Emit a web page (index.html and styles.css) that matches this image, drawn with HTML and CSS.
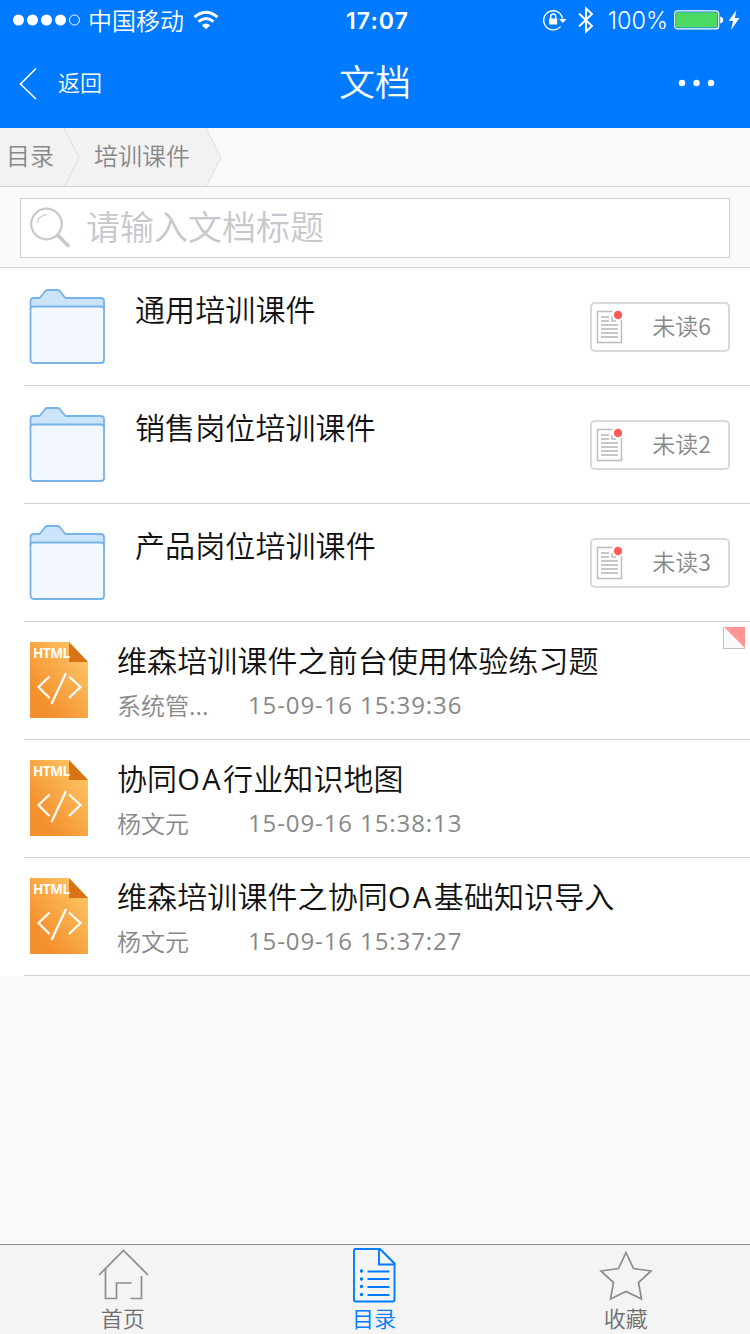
FILE: index.html
```html
<!DOCTYPE html>
<html lang="zh-CN">
<head>
    <meta charset="UTF-8">
    <meta name="viewport" content="width=device-width, initial-scale=1.0">
    <title>文档</title>
    <link rel="stylesheet" href="styles.css">
</head>
<body>
    <!-- shared icons -->
    <svg class="defs" width="0" height="0">
        <symbol id="folder" viewBox="0 0 76 76">
            <path d="M1.500 20V12q0-3 3-3h6l5-6q1-2 3-2h10q2 0 3 2l5 6h35q3.500 0 3.500 3v10z" fill="#cbe4fa" stroke="#78b4e8" stroke-width="1.800"/>
            <rect x="1.500" y="17.500" width="73.500" height="56.500" rx="3" fill="#f3f8ff" stroke="#78b4e8" stroke-width="1.800"/>
        </symbol>
        <linearGradient id="orange" x1="1" y1="0" x2="0" y2="1">
            <stop offset="0.1" stop-color="#ffc566"/>
            <stop offset="0.8" stop-color="#f38f2c"/>
        </linearGradient>
        <symbol id="html" viewBox="0 0 58 76">
            <path d="M0 0H39L58 20V76H0z" fill="url(#orange)"/>
            <path d="M39 0V20H58z" fill="#d87416"/>
            <path d="M19.500 34.500L8.500 45l11 11M39 34.500L50.500 45 39 56M36 31L21.500 62" fill="none" stroke="#fff" stroke-width="2.200"/>
        </symbol>
        <symbol id="paper" viewBox="0 0 28 36">
            <path d="M16.500 3.500H1.500V34.500H25.500V12M16 9v4h4" fill="none" stroke="#bcbcbc" stroke-width="1.500"/>
            <path d="M5 9h8M5 13h8M5 17h17M5 21h17M5 25h17M5 29h17" stroke="#b4b4b4" stroke-width="1.500"/>
            <circle cx="22" cy="7" r="4.200" fill="#ff5c5c"/>
        </symbol>
    </svg>

    <div class="status">
        <div class="status-left">
            <svg width="68" height="12"><g fill="#fff"><circle cx="5.500" cy="6" r="5.500"/><circle cx="19.500" cy="6" r="5.500"/><circle cx="33.500" cy="6" r="5.500"/><circle cx="47.500" cy="6" r="5.500"/></g><circle cx="61.500" cy="6" r="5" fill="none" stroke="#fff"/></svg>
            <span class="carrier">中国移动</span>
            <svg class="wifi" width="26" height="20" viewBox="0 0 26 20"><g fill="none" stroke="#fff" stroke-width="3"><path d="M1.500 7.200Q13-2.800 24.500 7.200"/><path d="M5.500 11.700Q13 5.300 20.500 11.700"/></g><path d="M8.800 15.300Q13 11.900 17.200 15.300L13 19.300z" fill="#fff"/></svg>
        </div>
        <div class="clock">17:07</div>
        <div class="status-right">
            <svg width="24" height="22" viewBox="0 0 24 22"><path d="M17.500 17.400A9.500 9.500 0 1 1 19.500 9.500" fill="none" stroke="#fff" stroke-width="1.400"/><path d="M16 10h7.500l-3.700 4z" fill="#fff"/><rect x="6.200" y="9.500" width="8" height="6" fill="#fff"/><path d="M7.700 10V7.500a2.500 2.500 0 0 1 5 0V10" fill="none" stroke="#fff" stroke-width="1.400"/></svg>
            <svg class="bluetooth" width="16" height="28" viewBox="0 0 16 28"><path d="M1 7.500L14 20 8 25.500V2.500L14 8 1 20.500" fill="none" stroke="#fff" stroke-width="1.900"/></svg>
            <span class="percent">100%</span>
            <svg width="50" height="20" viewBox="0 0 50 20"><rect x=".7" y=".9" width="44" height="18" rx="3" fill="none" stroke="#fff" stroke-width="1.200"/><rect x="2" y="2.200" width="41.400" height="15.400" rx="1.500" fill="#4cd964"/><path d="M46.200 6.500q3 .5 3 3.500t-3 3.500z" fill="#fff"/></svg>
            <svg class="bolt" width="12" height="20" viewBox="0 0 12 20"><path d="M8.500 0L.5 11H5L3 20 11.500 8H6.800z" fill="#fff"/></svg>
        </div>
    </div>

    <div class="navbar">
        <div class="back">
            <svg width="20" height="34" viewBox="0 0 20 34"><path d="M18 1.500L2.500 17 18 32" fill="none" stroke="#fff" stroke-width="1.600"/></svg>
            <span>返回</span>
        </div>
        <h1>文档</h1>
        <svg class="more" width="38" height="8"><g fill="#fff"><circle cx="4" cy="4" r="3.200"/><circle cx="18.500" cy="4" r="3.200"/><circle cx="33" cy="4" r="3.200"/></g></svg>
    </div>

    <div class="crumbs">
        <span class="crumb">目录</span>
        <svg width="16" height="58"><path d="M0 0L15 29.500 0 59" fill="#f2f2f2" stroke="#dcdcdc"/></svg>
        <span class="crumb second">培训课件</span>
        <svg class="last" width="16" height="58"><path d="M0 0L15 29.500 0 59" fill="#f2f2f2" stroke="#dcdcdc"/></svg>
    </div>

    <div class="search">
        <div class="search-box">
            <svg width="42" height="42" viewBox="0 0 42 42"><circle cx="16.500" cy="17" r="15.300" fill="none" stroke="#c8c8c8" stroke-width="2.200"/><path d="M7.500 16Q8 8.500 17 7.500" fill="none" stroke="#d4d4d4" stroke-width="1.400"/><path d="M27.500 28L38 38.500" stroke="#c8c8c8" stroke-width="3.500" stroke-linecap="round"/></svg>
            <span>请输入文档标题</span>
        </div>
    </div>

    <ul class="list">
        <li class="folder">
            <svg class="folder-icon"><use href="#folder"/></svg>
            <span class="title">通用培训课件</span>
            <span class="unread"><svg><use href="#paper"/></svg>未读6</span>
        </li>
        <li class="folder">
            <svg class="folder-icon"><use href="#folder"/></svg>
            <span class="title">销售岗位培训课件</span>
            <span class="unread"><svg><use href="#paper"/></svg>未读2</span>
        </li>
        <li class="folder">
            <svg class="folder-icon"><use href="#folder"/></svg>
            <span class="title">产品岗位培训课件</span>
            <span class="unread"><svg><use href="#paper"/></svg>未读3</span>
        </li>
        <li class="file">
            <div class="file-icon"><svg><use href="#html"/></svg><b>HTML</b></div>
            <div class="info">
                <div class="title">维森培训课件之前台使用体验练习题</div>
                <div class="meta"><span class="author">系统管...</span><span class="date">15-09-16 15:39:36</span></div>
            </div>
            <svg class="flag" width="22" height="22"><rect x=".5" y=".5" width="22" height="21" fill="#fafafa" stroke="#c0c0c0"/><path d="M1 0H22V21z" fill="#ff9595"/></svg>
        </li>
        <li class="file">
            <div class="file-icon"><svg><use href="#html"/></svg><b>HTML</b></div>
            <div class="info">
                <div class="title">协同<span class="latin">OA</span>行业知识地图</div>
                <div class="meta"><span class="author">杨文元</span><span class="date">15-09-16 15:38:13</span></div>
            </div>
        </li>
        <li class="file">
            <div class="file-icon"><svg><use href="#html"/></svg><b>HTML</b></div>
            <div class="info">
                <div class="title">维森培训课件之协同<span class="latin">OA</span>基础知识导入</div>
                <div class="meta"><span class="author">杨文元</span><span class="date">15-09-16 15:37:27</span></div>
            </div>
        </li>
    </ul>

    <div class="tabbar">
        <div class="tab home">
            <svg width="52" height="56" viewBox="0 0 52 56"><path d="M1 28L25.500 3.500 50 28M7.500 22V51.500H18.500V36H33.500M32.500 51.500H43.500V29" fill="none" stroke="#8c8c8c" stroke-width="1.700"/></svg>
            <span>首页</span>
        </div>
        <div class="tab active">
            <svg width="44" height="56" viewBox="0 0 44 56"><g fill="none" stroke="#007aff" stroke-width="1.900"><path d="M28 2H3.500Q2 2 2 3.500V53q0 1.500 1.500 1.500H41q1.500 0 1.500-1.500V16.500zM27 2V17.500H42.500"/><path d="M15.500 24.500h22M15.500 32h22M15.500 40h22M15.500 48h22"/></g><g fill="#007aff"><circle cx="9.500" cy="24" r="1.700"/><circle cx="9.500" cy="32" r="1.700"/><circle cx="9.500" cy="39.500" r="1.700"/><circle cx="9.500" cy="47.500" r="1.700"/></g></svg>
            <span>目录</span>
        </div>
        <div class="tab fav">
            <svg width="54" height="56" viewBox="0 0 54 56"><path d="M27 5.500L34.500 21.500 52 24 39.500 35.500 42.500 52 27 44.500 11.500 52 14.500 35.500 2 24 19.500 21.500z" fill="none" stroke="#8c8c8c" stroke-width="1.700"/></svg>
            <span>收藏</span>
        </div>
    </div>
</body>
</html>
```

FILE: styles.css
```css
*{
  box-sizing:border-box;
}
body{
  margin:0;
  height:1334px;
  display:flex;
  flex-direction:column;
  background-color:#fafafa;
  color:#111;
  font-family:"Noto Sans CJK SC", sans-serif;
  font-weight:350;
}
svg{
  display:block;
  flex:none;
}
.defs{
  height:0;
}

/* status bar */
.status{
  height:40px;
  display:grid;
  grid-template-columns:1fr auto 1fr;
  align-items:center;
  padding:0 10px 0 13px;
  background-color:#007aff;
  color:white;
  line-height:38px;
}
.status-left,
.status-right{
  display:flex;
  align-items:center;
}
.status-right{
  justify-content:flex-end;
}
.carrier{
  font-size:24px;
  margin:0 9px 0 7px;
}
.clock{
  font-family:Inter, sans-serif;
  font-size:23px;
  font-weight:600;
  letter-spacing:1.1px;
  padding:1px 0 0 2px;
}
.bluetooth{
  margin:0 14px 0 11px;
}
.percent{
  font-family:Inter, sans-serif;
  font-size:23.5px;
  font-weight:300;
  margin-right:6px;
  padding-top:1px;
}
.bolt{
  margin-left:4px;
}

/* nav bar */
.navbar{
  height:88px;
  display:grid;
  grid-template-columns:1fr auto 1fr;
  align-items:center;
  padding:0 18px 4px;
  background-color:#007aff;
  color:white;
}
.back{
  display:flex;
  align-items:center;
  gap:20px;
  font-size:22px;
  line-height:30px;
  padding-top:4px;
}
.back span{
  padding-bottom:6px;
}
.navbar h1{
  margin:0;
  font-size:36px;
  font-weight:350;
  line-height:80px;
  padding-bottom:4px;
}
.more{
  justify-self:end;
  margin:2px 16px 0 0;
}

/* breadcrumb */
.crumbs{
  height:59px;
  display:flex;
  border-bottom:1px solid #d2d2d2;
  font-size:24px;
  line-height:54px;
  color:#888;
}
.crumb{
  background-color:#f2f2f2;
  width:64px;
  padding-left:6px;
}
.crumbs svg{
  background-color:#f2f2f2;
}
.crumbs svg.last{
  background:none;
}
.crumb.second{
  width:126px;
  padding-left:14px;
}

.search{
  height:81px;
  padding:11px 20px 0;
  border-bottom:1px solid #d2d2d2;
}
.search-box{
  height:60px;
  display:flex;
  align-items:center;
  padding-left:9px;
  background-color:white;
  border:1px solid #d0d0d0;
  font-size:34px;
  line-height:54px;
  color:#c7c7cd;
}
.search-box span{
  margin-left:14px;
  padding-bottom:5px;
}

/* document list */
.list{
  margin:0;
  padding:0 0 0 24px;
  list-style:none;
  background-color:white;
}
.list li{
  position:relative;
  height:118px;
  display:flex;
  align-items:flex-start;
  border-bottom:1px solid #d0d0d0;
}
.title{
  font-family:"Open Sans", "Noto Sans CJK SC", sans-serif;
  font-size:30px;
  letter-spacing:0.1px;
  line-height:40px;
}
.latin{
  font-weight:400;
  font-size:29px;
  letter-spacing:2.5px;
}
.folder .title{
  flex:1;
  margin:22px 0 0 30px;
}
.folder-icon{
  width:76px;
  height:76px;
  margin:21px 0 0 5px;
}
.unread{
  width:140px;
  height:50px;
  margin:34px 20px 0 0;
  padding:0 17px 4px 4px;
  display:flex;
  align-items:center;
  justify-content:space-between;
  border:2px solid #d9d9d9;
  border-radius:5px;
  font-size:23px;
  line-height:42px;
  color:#888;
}
.unread svg{
  width:28px;
  height:36px;
  margin-top:2px;
}
.file-icon{
  position:relative;
  width:58px;
  height:76px;
  margin:20px 0 0 6px;
}
.file-icon svg{
  width:58px;
  height:76px;
}
.file-icon b{
  position:absolute;
  top:2px;
  left:3px;
  font-family:"Open Sans", sans-serif;
  font-size:13.5px;
  font-weight:700;
  letter-spacing:-0.5px;
  line-height:18px;
  color:white;
}
.info{
  margin:19px 0 0 29px;
}
.meta{
  display:flex;
  margin-top:7px;
  font-size:24px;
  line-height:34px;
  color:#888;
}
.author{
  width:131px;
}
.date{
  font-family:"Open Sans", sans-serif;
  font-weight:400;
  letter-spacing:0.9px;
}
.flag{
  position:absolute;
  top:5px;
  right:5px;
}

/* bottom tabs */
.tabbar{
  height:90px;
  margin-top:auto;
  display:flex;
  background-color:#f4f4f4;
  border-top:1px solid #8e8e8e;
}
.tab{
  flex:1 1 0;
  display:flex;
  flex-direction:column;
  align-items:center;
  padding:2px 0 0 3px;
  font-size:22px;
  line-height:28px;
  color:#6e6e6e;
}
.tab.home{
  padding-left:0;
}
.tab.active{
  padding-left:1px;
  color:#007aff;
}
.tab.home span{
  margin-right:3px;
}
```
